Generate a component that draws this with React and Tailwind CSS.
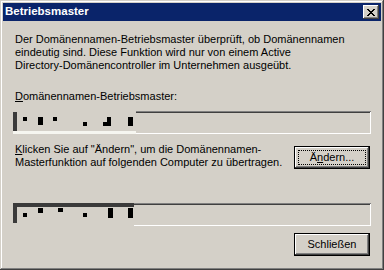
const font = { fontFamily: '"Liberation Sans", Arial, sans-serif' };

const raised =
  'shadow-[inset_-1px_-1px_#404040,inset_1px_1px_#ffffff,inset_-2px_-2px_#808080,inset_2px_2px_#d4d0c8]';
const sunken =
  'shadow-[inset_1px_1px_#808080,inset_-1px_-1px_#ffffff,inset_2px_2px_#404040,inset_-2px_-2px_#d4d0c8]';

function CloseGlyph() {
  const rows = [
    [[0, 2], [6, 2]],
    [[1, 2], [5, 2]],
    [[2, 4]],
    [[3, 2]],
    [[2, 4]],
    [[1, 2], [5, 2]],
    [[0, 2], [6, 2]],
  ];
  return (
    <svg width="8" height="7" viewBox="0 0 8 7" shapeRendering="crispEdges">
      {rows.map((segs, y) =>
        segs.map(([x, w], i) => <rect key={`${y}-${i}`} x={x} y={y} width={w} height="1" fill="#000" />)
      )}
    </svg>
  );
}

function Button({ children, focused }) {
  return (
    <div className="w-[76px] h-[23px] bg-black p-[1px] shrink-0">
      <div className={`w-full h-full bg-[#d4d0c8] ${raised} flex items-center justify-center relative`}>
        {focused && (
          <div className="absolute inset-[3px] border border-dotted border-black" />
        )}
        <span className="text-[11px] text-black leading-none">{children}</span>
      </div>
    </div>
  );
}

function Dot({ cls }) {
  return <div className={`absolute bg-black ${cls}`} />;
}

export default function App() {
  return (
    <div
      style={font}
      className="w-[384px] h-[270px] bg-[#d4d0c8] p-[3px] flex flex-col shadow-[inset_-1px_-1px_#404040,inset_1px_1px_#d4d0c8,inset_-2px_-2px_#808080,inset_2px_2px_#ffffff] overflow-hidden"
    >
      {/* title bar */}
      <div className="h-[18px] bg-[#0a246a] flex items-center justify-between pl-[2px] pr-[2px] shrink-0">
        <span className="text-white font-bold text-[11.5px] leading-none">Betriebsmaster</span>
        <div className={`w-[16px] h-[14px] bg-[#d4d0c8] ${raised} flex items-center justify-center`}>
          <CloseGlyph />
        </div>
      </div>

      <div className="px-[10px] flex flex-col text-[11px] leading-[13px] text-black">
        <p className="mt-[12px] pl-[2px]">
          Der Domänennamen-Betriebsmaster überprüft, ob Domänennamen
          <br />
          eindeutig sind. Diese Funktion wird nur von einem Active
          <br />
          Directory-Domänencontroller im Unternehmen ausgeübt.
        </p>

        <p className="mt-[18px] pl-[2px]">
          <span className="underline">D</span>omänennamen-Betriebsmaster:
        </p>

        {/* field 1 */}
        <div className={`mt-[8px] h-[23px] w-[358px] bg-[#d4d0c8] ${sunken} relative`}>
          <div className="absolute left-0 top-0 w-[123px] h-full bg-[#d4d0c8]">
            <div className="absolute left-0 top-[1px] w-[4px] h-[19px] bg-[#3a3a3a]" />
            <div className="absolute left-0 bottom-0 w-full h-[3px] bg-[#f6f6f0]" />
            <Dot cls="left-[10px] top-[6px] w-[4px] h-[4px]" />
            <Dot cls="left-[25px] top-[6px] w-[5px] h-[8px]" />
            <Dot cls="left-[40px] top-[6px] w-[4px] h-[4px]" />
            <Dot cls="left-[70px] top-[11px] w-[4px] h-[4px]" />
            <Dot cls="left-[90px] top-[11px] w-[4px] h-[4px]" />
            <Dot cls="left-[94px] top-[6px] w-[4px] h-[9px]" />
            <Dot cls="left-[115px] top-[6px] w-[5px] h-[9px]" />
          </div>
        </div>

        <div className="mt-[9px] flex items-start justify-between">
          <p className="pl-[2px]">
            <span className="underline">K</span>licken Sie auf "Ändern", um die Domänennamen-
            <br />
            Masterfunktion auf folgenden Computer zu übertragen.
          </p>
          <div className="mt-[3px] mr-[1px]">
            <Button focused>
              Ä<span className="underline">n</span>dern...
            </Button>
          </div>
        </div>

        {/* field 2 */}
        <div className={`mt-[34px] h-[23px] w-[358px] bg-[#d4d0c8] ${sunken} relative`}>
          <div className="absolute left-0 top-0 w-[121px] h-full bg-[#d4d0c8]">
            <div className="absolute left-0 top-0 w-full h-[4px] bg-[#3a3a3a]" />
            <div className="absolute left-0 top-0 w-[4px] h-[20px] bg-[#3a3a3a]" />
            <Dot cls="left-[10px] top-[10px] w-[4px] h-[4px]" />
            <Dot cls="left-[25px] top-[5px] w-[5px] h-[5px]" />
            <Dot cls="left-[45px] top-[5px] w-[5px] h-[4px]" />
            <Dot cls="left-[70px] top-[10px] w-[4px] h-[4px]" />
            <Dot cls="left-[95px] top-[5px] w-[5px] h-[10px]" />
            <Dot cls="left-[115px] top-[5px] w-[5px] h-[10px]" />
          </div>
        </div>

        <div className="mt-[7px] flex justify-end mr-[1px]">
          <Button>Schließen</Button>
        </div>
      </div>
    </div>
  );
}
